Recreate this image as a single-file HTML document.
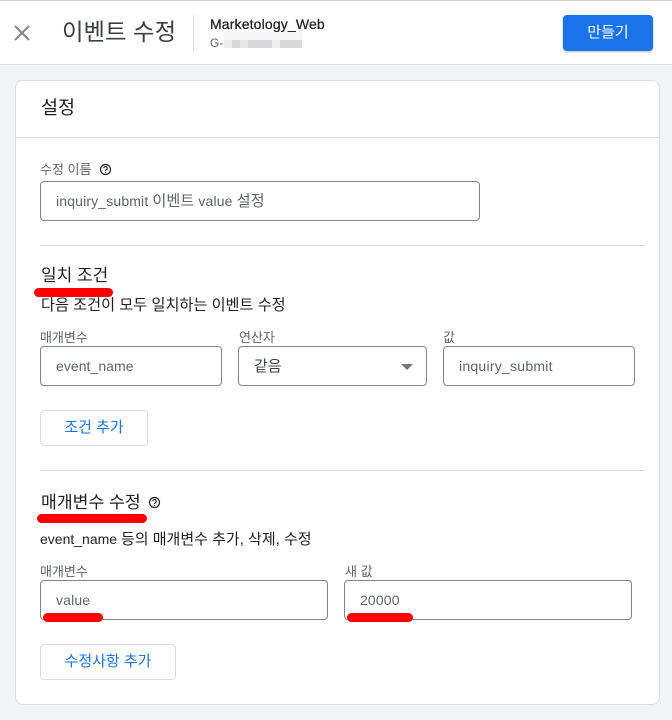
<!DOCTYPE html>
<html lang="ko">
<head>
<meta charset="utf-8">
<style>
html,body{margin:0;padding:0}
body{width:672px;height:720px;position:relative;overflow:hidden;background:#f1f3f4;font-family:"Liberation Sans","Noto Sans CJK KR",sans-serif;color:#202124}
.a{position:absolute;white-space:nowrap;line-height:20px}
.box{position:absolute;box-sizing:border-box;border:1px solid #80868b;border-radius:4px;background:#fff}
.line{position:absolute;height:1px;background:#dadce0}
.lab{font-size:13px;color:#5f6368}
.val{font-size:14px;color:#5f6368;letter-spacing:.15px}
.k{font-size:15.2px;letter-spacing:0}
.btn{position:absolute;box-sizing:border-box;border:1px solid #dadce0;border-radius:4px;background:#fff;color:#1a73e8;font-size:15px;text-align:center;height:36px;line-height:33px}
.red{position:absolute;background:#f00;border-radius:5px}
.h{font-size:17px;color:#202124}
.b{position:absolute;height:8px}
</style>
</head>
<body>
<div style="position:absolute;left:0;top:0;width:672px;height:65px;box-sizing:border-box;background:#fff;border-top:1px solid #d0d0d0;border-bottom:1px solid #dadce0"></div>
<svg style="position:absolute;left:10px;top:21px" width="24" height="24" viewBox="0 0 24 24"><path d="M5 5L19 19M19 5L5 19" stroke="#80868b" stroke-width="2" fill="none"/></svg>
<div class="a" style="left:62px;top:21px;font-size:23.4px;color:#3c4043;line-height:22px">이벤트 수정</div>
<div style="position:absolute;left:193px;top:15px;width:1px;height:36px;background:#dadce0"></div>
<div class="a" style="left:210px;top:14px;font-size:14px;letter-spacing:.15px;color:#202124;-webkit-text-stroke:.25px #202124">Marketology_Web</div>
<div class="a" style="left:210px;top:33px;font-size:12px;color:#5f6368">G-</div>
<div style="position:absolute;left:224px;top:32px;width:78px;height:16px;overflow:hidden">
<div class="b" style="left:0;width:78px;top:0;background:#f7f7f7"></div>
<div class="b" style="left:0;width:78px;top:8px;background:#d9d9dc"></div>
<div class="b" style="left:16px;width:8px;top:8px;background:#ece6e4"></div>
<div class="b" style="left:48px;width:8px;top:8px;background:#eeeeee"></div>
<div class="b" style="left:0;width:8px;top:8px;background:#ececec"></div>
</div>
<div style="position:absolute;left:563px;top:15px;width:90px;height:36px;border-radius:4px;background:#1a73e8;box-shadow:0 1px 2px rgba(60,64,67,.35);color:#fff;font-size:15px;text-align:center;line-height:35px">만들기</div>

<div style="position:absolute;left:15px;top:80px;width:645px;height:625px;box-sizing:border-box;background:#fff;border:1px solid #dadce0;border-radius:8px"></div>
<div class="a h" style="left:41px;top:98px;font-size:18.5px">설정</div>
<div class="line" style="left:16px;top:137px;width:643px"></div>

<div class="a lab" style="left:40px;top:160px">수정 이름</div>
<svg style="position:absolute;left:99px;top:163px" width="13" height="13" viewBox="0 0 13 13"><circle cx="6.5" cy="6.5" r="5" fill="none" stroke="#202124" stroke-width="1.2"/><path d="M4.8 5.3A1.7 1.7 0 1 1 7.3 6.8C6.7 7.1 6.5 7.4 6.5 8" fill="none" stroke="#202124" stroke-width="1.1"/><rect x="6" y="8.8" width="1.1" height="1.1" fill="#202124"/></svg>
<div class="box" style="left:40px;top:181px;width:440px;height:40px"></div>
<div class="a val" style="left:56px;top:191px">inquiry_submit <span class="k">이벤트</span> value <span class="k">설정</span></div>
<div class="line" style="left:40px;top:245px;width:605px"></div>

<div class="a h" style="left:41px;top:266px">일치 조건</div>
<div class="red" style="left:34px;top:288px;width:79px;height:9px"></div>
<div class="a" style="left:41px;top:296px;font-size:15.2px">다음 조건이 모두 일치하는 이벤트 수정</div>

<div class="a lab" style="left:40px;top:328px">매개변수</div>
<div class="a lab" style="left:239px;top:328px">연산자</div>
<div class="a lab" style="left:443px;top:328px">값</div>
<div class="box" style="left:40px;top:346px;width:182px;height:40px"></div>
<div class="a val" style="left:56px;top:356px;letter-spacing:.05px">event_name</div>
<div class="box" style="left:238px;top:346px;width:189px;height:40px"></div>
<div class="a" style="left:254px;top:357px;font-size:15px;color:#3c4043">같음</div>
<div style="position:absolute;left:401px;top:364px;width:0;height:0;border-left:6px solid transparent;border-right:6px solid transparent;border-top:6px solid #757575"></div>
<div class="box" style="left:443px;top:346px;width:192px;height:40px"></div>
<div class="a val" style="left:459px;top:356px;letter-spacing:.25px">inquiry_submit</div>
<div class="btn" style="left:40px;top:410px;width:108px">조건 추가</div>
<div class="line" style="left:40px;top:470px;width:605px"></div>

<div class="a h" style="left:41px;top:492px;font-size:17.2px">매개변수 수정</div>
<svg style="position:absolute;left:148px;top:496px" width="13" height="13" viewBox="0 0 13 13"><circle cx="6.5" cy="6.5" r="5" fill="none" stroke="#202124" stroke-width="1.2"/><path d="M4.8 5.3A1.7 1.7 0 1 1 7.3 6.8C6.7 7.1 6.5 7.4 6.5 8" fill="none" stroke="#202124" stroke-width="1.1"/><rect x="6" y="8.8" width="1.1" height="1.1" fill="#202124"/></svg>
<div class="red" style="left:37px;top:514px;width:110px;height:9px"></div>
<div class="a" style="left:40px;top:529px;font-size:14px">event_name <span style="font-size:15px">등의 매개변수 추가, 삭제, 수정</span></div>

<div class="a lab" style="left:40px;top:562px">매개변수</div>
<div class="a lab" style="left:345px;top:562px">새 값</div>
<div class="box" style="left:40px;top:580px;width:288px;height:40px"></div>
<div class="a val" style="left:56px;top:590px">value</div>
<div class="box" style="left:344px;top:580px;width:288px;height:40px"></div>
<div class="a val" style="left:360px;top:590px">20000</div>
<div class="red" style="left:43px;top:613px;width:60px;height:9px"></div>
<div class="red" style="left:347px;top:613px;width:66px;height:9px"></div>
<div class="btn" style="left:40px;top:644px;width:136px">수정사항 추가</div>
</body>
</html>
